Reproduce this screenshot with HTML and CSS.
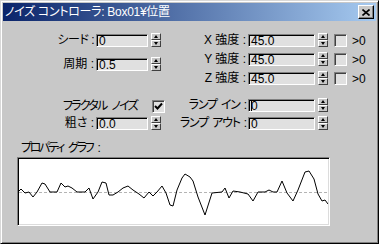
FILE: index.html
```html
<!DOCTYPE html>
<html lang="ja">
<head>
<meta charset="utf-8">
<title>ノイズ コントローラ</title>
<link rel="stylesheet" href="styles.css">
</head>
<body>
<div class="window">
  <div class="titlebar">
    <span class="title">ノイズ コントローラ: Box01¥位置</span>
    <span class="close"><svg width="8" height="7" viewBox="0 0 8 7"><path d="M0.5 0.5 L7.5 6.5 M7.5 0.5 L0.5 6.5" stroke="#000" stroke-width="1.6" fill="none"/></svg></span>
  </div>
  <div class="content">
    <div class="params">
      <div class="col left">
        <div class="row">
          <span class="lbl kana-s">シード :</span>
          <span class="field narrow">0</span>
          <span class="spin"><span class="half up"><i></i></span><span class="half down"><i></i></span></span>
        </div>
        <div class="row gap10">
          <span class="lbl">周期 :</span>
          <span class="field narrow">0.5</span>
          <span class="spin"><span class="half up"><i></i></span><span class="half down"><i></i></span></span>
        </div>
        <div class="row gap28">
          <span class="lbl fractal">フラクタル ノイズ</span>
          <span class="check on"><svg width="9" height="9" viewBox="0 0 9 9"><path d="M1 4 L3.5 6.5 L8 1.5" stroke="#000" stroke-width="2" fill="none"/></svg></span>
        </div>
        <div class="row gap3">
          <span class="lbl">粗さ :</span>
          <span class="field narrow">0.0</span>
          <span class="spin"><span class="half up"><i></i></span><span class="half down"><i></i></span></span>
        </div>
      </div>
      <div class="col right">
        <div class="row">
          <span class="lbl">X 強度 :</span>
          <span class="field wide">45.0</span>
          <span class="spin"><span class="half up"><i></i></span><span class="half down"><i></i></span></span>
          <span class="check"></span>
          <span class="gt">&gt;0</span>
        </div>
        <div class="row gap5">
          <span class="lbl">Y 強度 :</span>
          <span class="field wide">45.0</span>
          <span class="spin"><span class="half up"><i></i></span><span class="half down"><i></i></span></span>
          <span class="check"></span>
          <span class="gt">&gt;0</span>
        </div>
        <div class="row gap5">
          <span class="lbl">Z 強度 :</span>
          <span class="field wide">45.0</span>
          <span class="spin"><span class="half up"><i></i></span><span class="half down"><i></i></span></span>
          <span class="check"></span>
          <span class="gt">&gt;0</span>
        </div>
        <div class="row gap13">
          <span class="lbl kana">ランプ イン :</span>
          <span class="field wide"><span class="caret"></span>0</span>
          <span class="spin"><span class="half up"><i></i></span><span class="half down"><i></i></span></span>
        </div>
        <div class="row gap4">
          <span class="lbl kana">ランプ アウト :</span>
          <span class="field wide">0</span>
          <span class="spin"><span class="half up"><i></i></span><span class="half down"><i></i></span></span>
        </div>
      </div>
    </div>
    <div class="graph-section">
      <div class="graph-label">プロパティ グラフ :</div>
      <div class="graph">
        <svg width="309" height="65" viewBox="19 159 309 65">
          <line x1="19" y1="192.5" x2="328" y2="192.5" stroke="#b4b4b4" stroke-width="1" stroke-dasharray="3 2"/>
          <polyline fill="none" stroke="#000" stroke-width="1" points="18,192 21,189 25,193 29,192 33,197 37,192 42,183 45,184 50,192 57,192 61,183 65,187 68,186 72,188 77,192 85,192 89,188 93,199 98,192 102,182 106,183 109,195 113,195 118,192 123,188 128,186 133,190 139,194 144,198 149,192 153,196 157,192 162,186 166,193 170,205 173,206 177,190 182,178 185,174 190,177 193,181 198,197 205,215 212,193 222,192 225,188 229,198 233,191 240,192 248,194 253,201 258,192 265,192 269,190 273,192 277,192 282,181 287,193 293,201 298,190 305,172 309,171 314,179 318,194 322,201 325,200 328,204"/>
        </svg>
      </div>
    </div>
  </div>
</div>
</body>
</html>
```

FILE: styles.css
```css
* { box-sizing: border-box; margin: 0; padding: 0; }

body {
  margin: 0;
  width: 379px;
  height: 244px;
  overflow: hidden;
  font-family: "Liberation Sans", "Noto Sans CJK JP", sans-serif;
  font-size: 12px;
  font-feature-settings: "palt";
  color: #000;
}

.window {
  width: 379px;
  height: 244px;
  background: #c8c8c8;
  border: 1px solid;
  border-color: #d8d8d8 #000 #000 #d8d8d8;
  box-shadow: inset 1px 1px 0 #fff, inset -1px -1px 0 #808080;
  padding: 2px;
}

.titlebar {
  height: 18px;
  background: linear-gradient(to right, #0a246a, #a6caf0);
  display: flex;
  align-items: center;
  justify-content: space-between;
  padding: 0 2px 0 2px;
  color: #fff;
}

.title {
  line-height: 16px;
  white-space: nowrap;
  letter-spacing: -0.3px;
}

.close {
  width: 16px;
  height: 14px;
  background: #c8c8c8;
  border: 1px solid;
  border-color: #fff #000 #000 #fff;
  box-shadow: inset -1px -1px 0 #808080;
  display: flex;
  align-items: center;
  justify-content: center;
  padding-right: 1px;
}

.content {
  padding-top: 12px;
}

.params {
  display: grid;
  grid-template-columns: 177px 1fr;
}

.col {
  display: flex;
  flex-direction: column;
}

.row {
  display: flex;
  align-items: flex-start;
  height: 14px;
  line-height: 14px;
  white-space: nowrap;
}

.gap3 { margin-top: 3px; }
.gap4 { margin-top: 4px; }
.gap5 { margin-top: 5px; }
.gap10 { margin-top: 10px; }
.gap13 { margin-top: 13px; }
.gap28 { margin-top: 28px; }

.lbl {
  display: flex;
  justify-content: flex-end;
  flex: none;
  white-space: pre;
  margin-right: 2px;
  height: 14px;
}

.kana { letter-spacing: -1.2px; word-spacing: 2px; }
.kana-s { letter-spacing: -0.5px; }

.left .lbl { width: 91px; }
.left .lbl.fractal { width: 134px; margin-right: 15px; letter-spacing: -1.7px; word-spacing: 3px; }
.right .lbl { width: 66px; }

.field {
  flex: none;
  height: 13px;
  margin-top: 1px;
  background: #e0e0e0;
  border: 1px solid;
  border-color: #808080 #fff #fff #808080;
  box-shadow: inset 1px 1px 0 #000;
  padding-left: 2px;
  line-height: 12px;
  display: flex;
  align-items: center;
}

.field.narrow { width: 52px; }
.field.wide { width: 67px; }

.caret {
  display: inline-block;
  width: 1px;
  height: 11px;
  background: #000;
  margin-right: -1px;
}

.spin {
  flex: none;
  width: 10px;
  height: 14px;
  margin-left: 3px;
  display: flex;
  flex-direction: column;
}

.half {
  height: 7px;
  background: #c8c8c8;
  border: 1px solid;
  border-color: #fff #404040 #404040 #fff;
  display: flex;
  align-items: center;
  justify-content: center;
}

.half i {
  display: block;
  width: 0;
  height: 0;
  border-left: 2.5px solid transparent;
  border-right: 2.5px solid transparent;
}

.up i { border-bottom: 3px solid #000; }
.down i { border-top: 3px solid #000; }

.check {
  flex: none;
  width: 13px;
  height: 13px;
  margin-top: 1px;
  background: #e0e0e0;
  border: 1px solid;
  border-color: #808080 #fff #fff #808080;
  box-shadow: inset 1px 1px 0 #404040;
  display: flex;
  align-items: center;
  justify-content: center;
}

.right .check { margin-left: 6px; }

.gt {
  margin-left: 5px;
  line-height: 14px;
  margin-top: 1px;
}

.graph-section {
  padding-left: 14px;
  margin-top: 11px;
}

.graph-label {
  padding-left: 4px;
  line-height: 14px;
  white-space: pre;
  letter-spacing: -2.3px;
  word-spacing: 4px;
}

.graph {
  margin-top: 2px;
  width: 313px;
  height: 69px;
  background: #fff;
  border: 1px solid;
  border-color: #808080 #fff #fff #808080;
  box-shadow: inset 1px 1px 0 #000, inset -1px -1px 0 #dcdcdc;
  padding: 1px;
}

.graph svg { display: block; }
```
